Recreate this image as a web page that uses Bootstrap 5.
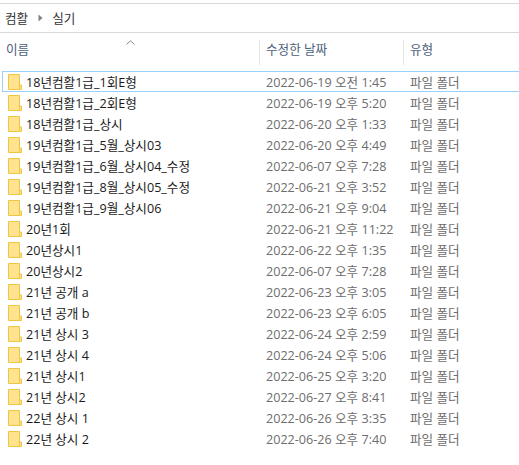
<!DOCTYPE html>
<html lang="ko">
<head>
<meta charset="utf-8">
<title>실기</title>
<link rel="stylesheet" href="https://cdn.jsdelivr.net/npm/bootstrap@5.3.0/dist/css/bootstrap.min.css">
<style>
html,body{margin:0;height:465px;overflow:hidden;background:#fff}
body{font-family:"Open Sans","Noto Sans CJK KR",sans-serif;font-size:12.6px;line-height:19px;color:#1a1a1a}
.crumbs{margin-top:3px;height:30px;border-top:1px solid #d9d9d9;border-bottom:1px solid #d9d9d9;padding-left:5px;font-size:12.6px;color:#333}
.crumbs svg{margin:0 9px 0 10px}
.heads{height:38px;padding-top:7px}
.hcell{height:25px;color:#4c607a;font-size:12.6px}
.hname{width:259px;padding-left:6px;position:relative}
.hdate{width:144px;padding-left:6px;border-left:1px solid #e5e5e5}
.htype{padding-left:6px;border-left:1px solid #e5e5e5;width:116px}
.sorter{position:absolute;left:126px;top:0}
.rows{padding-left:2px}
.frow{height:21px;border:1px solid transparent;border-right:0}
.frow.picked{border-color:#99d1ff}
.cname{width:257px;padding-left:5px;gap:4px}
.cdate{width:144px;padding-left:6px;color:#6d6d6d}
.ctype{padding-left:6px;color:#6d6d6d}
.frow span,.cdate,.ctype{position:relative;top:.5px}
</style>
</head>
<body>
<div class="crumbs d-flex align-items-center">
  <span>컴활</span>
  <svg width="5" height="8" viewBox="0 0 5 8"><path d="M0.5 0.5 4.5 4 0.5 7.5Z" fill="#808080"/></svg>
  <span>실기</span>
</div>
<div class="heads d-flex">
  <div class="hcell hname">이름
    <svg class="sorter" width="9" height="5" viewBox="0 0 9 5"><path d="M0.5 4.5 4.5 0.8 8.5 4.5" fill="none" stroke="#8a8a8a"/></svg>
  </div>
  <div class="hcell hdate">수정한 날짜</div>
  <div class="hcell htype">유형</div>
</div>
<div class="rows" id="list"></div>
<script>
var data=[
["18년컴활1급_1회E형","2022-06-19 오전 1:45"],
["18년컴활1급_2회E형","2022-06-19 오후 5:20"],
["18년컴활1급_상시","2022-06-20 오후 1:33"],
["19년컴활1급_5월_상시03","2022-06-20 오후 4:49"],
["19년컴활1급_6월_상시04_수정","2022-06-07 오후 7:28"],
["19년컴활1급_8월_상시05_수정","2022-06-21 오후 3:52"],
["19년컴활1급_9월_상시06","2022-06-21 오후 9:04"],
["20년1회","2022-06-21 오후 11:22"],
["20년상시1","2022-06-22 오후 1:35"],
["20년상시2","2022-06-07 오후 7:28"],
["21년 공개 a","2022-06-23 오후 3:05"],
["21년 공개 b","2022-06-23 오후 6:05"],
["21년 상시 3","2022-06-24 오후 2:59"],
["21년 상시 4","2022-06-24 오후 5:06"],
["21년 상시1","2022-06-25 오후 3:20"],
["21년 상시2","2022-06-27 오후 8:41"],
["22년 상시 1","2022-06-26 오후 3:35"],
["22년 상시 2","2022-06-26 오후 7:40"]];
var icon='<svg width="14" height="16" viewBox="0 0 14 16" class="flex-shrink-0"><path d="M.5.5H11.5V15.5H.5Z" fill="#ffe38f" stroke="#eec643"/><path d="M11.5 11H13.5V15.5H11.5Z" fill="#ffe38f" stroke="#eec643"/></svg>';
document.getElementById('list').innerHTML=data.map(function(r,i){
 return '<div class="frow d-flex align-items-center'+(i==0?' picked':'')+'"><div class="cname d-flex align-items-center">'+icon+'<span>'+r[0]+'</span></div><div class="cdate">'+r[1]+'</div><div class="ctype">파일 폴더</div></div>';
}).join('');
</script>
<script src="https://cdn.jsdelivr.net/npm/bootstrap@5.3.0/dist/js/bootstrap.bundle.min.js"></script>
</body>
</html>
